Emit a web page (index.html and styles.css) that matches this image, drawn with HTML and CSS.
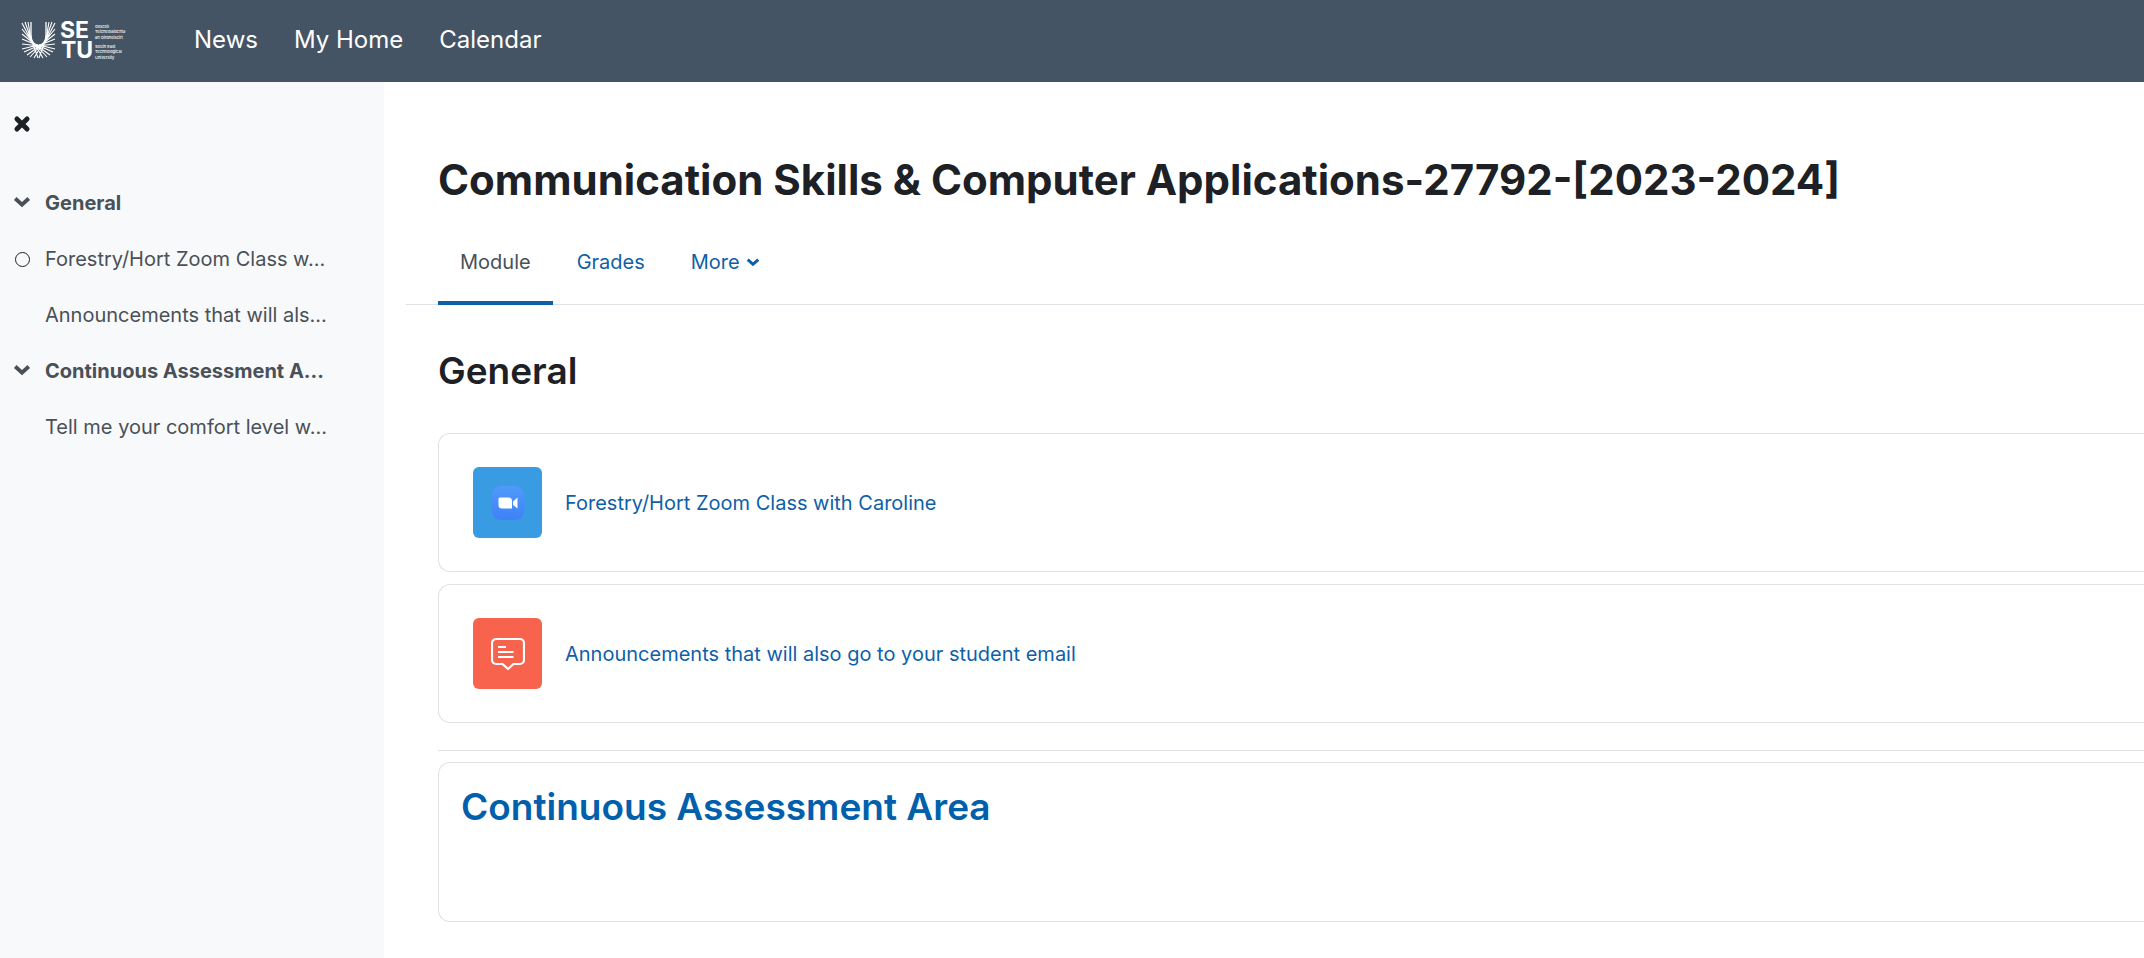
FILE: index.html
```html
<!DOCTYPE html>
<html lang="en">
<head>
<meta charset="utf-8">
<meta name="viewport" content="width=device-width, initial-scale=1">
<title>Communication Skills &amp; Computer Applications</title>
<link rel="stylesheet" href="styles.css">
</head>
<body>
<header class="topbar">
  <a class="brand" href="#" aria-label="SETU home">
    <svg class="brand-logo" viewBox="0 0 110 42" aria-hidden="true">
      <g fill="none" stroke="#fff" stroke-width="1.1">
        <path d="M11 3v13c0 14 15 14 15 0V3" stroke-width="1.3"/>
        <path d="M8 3l3 17M5 3l7 20M2 4l11 21M2 10l13 16M2 15l15 12M2 20l17 7M2 25l18 2M2 30l16-4M4 33l16-7M7 36l14-10M10 38l12-13M14 39l9-15M18 39l-5-14"/>
        <path d="M29 3l-3 17M32 3l-7 20M35 4l-11 21M35 10l-13 16M35 15l-15 12M35 20l-17 7M35 25l-18 2M35 30l-16-4M33 33l-16-7M30 36l-14-10M27 38l-12-13M23 39l-9-15M19 39l5-14"/>
      </g>
      <g class="logo-big"><text x="40" y="19">SE</text><text x="41" y="39">TU</text></g>
      <g class="logo-small">
        <text x="75" y="9">Ollscoil</text><text x="75" y="14">Teicneolaíochta</text><text x="75" y="20">an Oirdheiscirt</text>
        <text x="75" y="29">South East</text><text x="75" y="34">Technological</text><text x="75" y="40">University</text>
      </g>
    </svg>
  </a>
  <nav class="topnav" aria-label="Site">
    <a href="#">News</a>
    <a href="#">My Home</a>
    <a href="#">Calendar</a>
  </nav>
</header>
<div class="page">
  <aside class="drawer">
    <button class="close" type="button" aria-label="Close module index">
      <svg viewBox="0 0 16 16" aria-hidden="true"><path d="M3.500 3.500l9 9M12.500 3.500l-9 9" stroke="currentColor" stroke-width="4.400" stroke-linecap="round"/></svg>
    </button>
    <nav class="index" aria-label="Module index">
      <div class="row section"><button class="toggle" type="button" aria-label="Collapse General"><svg viewBox="0 0 16 16" aria-hidden="true"><path d="M2 4L8 9.500l6-5.500" fill="none" stroke="currentColor" stroke-width="3.400"/></svg></button><a href="#">General</a></div>
      <div class="row"><span class="status"></span><a href="#">Forestry/Hort Zoom Class w...</a></div>
      <div class="row"><span class="spacer"></span><a href="#">Announcements that will als...</a></div>
      <div class="row section"><button class="toggle" type="button" aria-label="Collapse Continuous Assessment Area"><svg viewBox="0 0 16 16" aria-hidden="true"><path d="M2 4L8 9.500l6-5.500" fill="none" stroke="currentColor" stroke-width="3.400"/></svg></button><a href="#">Continuous Assessment A...</a></div>
      <div class="row"><span class="spacer"></span><a href="#">Tell me your comfort level w...</a></div>
    </nav>
  </aside>
  <main class="content">
    <h1>Communication Skills &amp; Computer Applications-27792-[2023-2024]</h1>
    <nav class="tabs" aria-label="Module">
      <a class="tab active" href="#" aria-current="page">Module</a>
      <a class="tab" href="#">Grades</a>
      <button class="tab" type="button">More
        <svg viewBox="0 0 12 12" aria-hidden="true"><path d="M1.500 4L6 8l4.500-4" fill="none" stroke="currentColor" stroke-width="2.600"/></svg>
      </button>
    </nav>
    <section class="general">
      <h2>General</h2>
      <ul class="activities">
        <li class="card">
          <span class="tile zoom">
            <svg viewBox="0 0 34 34" aria-hidden="true">
              <defs><linearGradient id="zg" x1="0" y1="0" x2="0" y2="1"><stop offset="0" stop-color="#4f9bfb"/><stop offset="1" stop-color="#3f80f8"/></linearGradient></defs>
              <rect x="0.500" width="33" height="34" rx="10" fill="url(#zg)"/>
              <path d="M8.500 11.500h9a3.500 3.500 0 0 1 3.500 3.500v7.500H11a3.500 3.500 0 0 1-3.500-3.500v-6.500zM22 15.500l4.500-4v11L22 19z" fill="#fff"/>
            </svg>
          </span>
          <a href="#">Forestry/Hort Zoom Class with Caroline</a>
        </li>
        <li class="card">
          <span class="tile forum">
            <svg viewBox="0 0 34 34" fill="none" stroke="#fff" stroke-width="2.200" aria-hidden="true">
              <path d="M5 2h24a4 4 0 0 1 4 4v17a4 4 0 0 1-4 4h-6.500L17 32l-5.500-5H5a4 4 0 0 1-4-4V6a4 4 0 0 1 4-4z" stroke-linejoin="round"/>
              <path d="M7 10h8M7 15h15.500M7 20h15.500"/>
            </svg>
          </span>
          <a href="#">Announcements that will also go to your student email</a>
        </li>
      </ul>
    </section>
    <section class="card area">
      <h2><a href="#">Continuous Assessment Area</a></h2>
    </section>
  </main>
</div>
</body>
</html>
```
FILE: styles.css
```css
* { box-sizing: border-box; }
body {
  margin: 0;
  min-height: 100vh;
  display: flex;
  flex-direction: column;
  background: #fff;
  color: #1d2125;
  font: 20px/30px Inter, "Open Sans", sans-serif;
}
a { color: #0f5fa8; text-decoration: none; }
button { font: inherit; border: 0; padding: 0; background: none; }
h1, h2, ul { margin: 0; padding: 0; }

.topbar {
  display: flex;
  align-items: center;
  gap: 64px;
  height: 82px;
  padding: 0 20px 2px;
  background: #445464;
}
.brand { display: flex; }
.brand-logo { width: 110px; height: 42px; overflow: visible; }
.logo-big { fill: #fff; font: 700 23px/20px Inter, sans-serif; }
.logo-small { fill: #fff; font: 500 4px Inter, sans-serif; }
.topnav { display: flex; gap: 36px; font-size: 24px; }
.topnav a { color: #fff; }

.page { flex: 1; display: flex; }
.drawer {
  flex: 0 0 384px;
  padding: 33px 13px;
  background: #f8f9fb;
}
.close { display: flex; color: #1d2125; }
.close svg { width: 18px; height: 18px; }
.index { padding-top: 42px; }
.row { display: flex; align-items: center; gap: 14px; height: 56px; }
.row a { color: #495057; white-space: nowrap; }
.section { font-weight: 700; }
.toggle { display: flex; color: #495057; }
.toggle svg { width: 18px; height: 18px; }
.spacer { width: 18px; }
.status {
  width: 15px;
  height: 15px;
  margin: 0 1px 0 2px;
  border: 1px solid #1d2125;
  border-radius: 50%;
}

.content { flex: 1; min-width: 0; padding: 73px 0 36px 54px; }
h1 { font-size: 42px; line-height: 50px; font-weight: 700; }
.tabs {
  display: flex;
  gap: 2px;
  margin: 14px 0 44px -32px;
  padding-left: 32px;
  border-bottom: 1px solid #dee2e6;
}
.tab {
  display: flex;
  align-items: center;
  gap: 6px;
  height: 86px;
  padding: 4px 22px 0;
  margin-bottom: -1px;
  border-bottom: 4px solid transparent;
  color: #0f5fa8;
}
.tab svg { width: 14px; height: 14px; }
.tab.active { color: #495057; border-bottom-color: #0f5fa8; }
h2 { font-size: 37px; line-height: 44px; font-weight: 600; }
h2 a { color: #0060ac; }
.activities { display: grid; gap: 12px; margin-top: 40px; list-style: none; }
.general { padding-bottom: 27px; border-bottom: 1px solid #dee2e6; }
.card {
  display: flex;
  align-items: center;
  gap: 23px;
  padding: 33px 34px;
  border: 1px solid #dee2e6;
  border-right: 0;
  border-radius: 12px 0 0 12px;
}
.tile {
  display: flex;
  align-items: center;
  justify-content: center;
  width: 69px;
  height: 71px;
  border-radius: 6px;
}
.tile svg { width: 34px; height: 34px; }
.zoom { background: #399be2; }
.forum { background: #f7634d; }
.area { align-items: flex-start; min-height: 160px; margin-top: 11px; padding: 22px; }
```
